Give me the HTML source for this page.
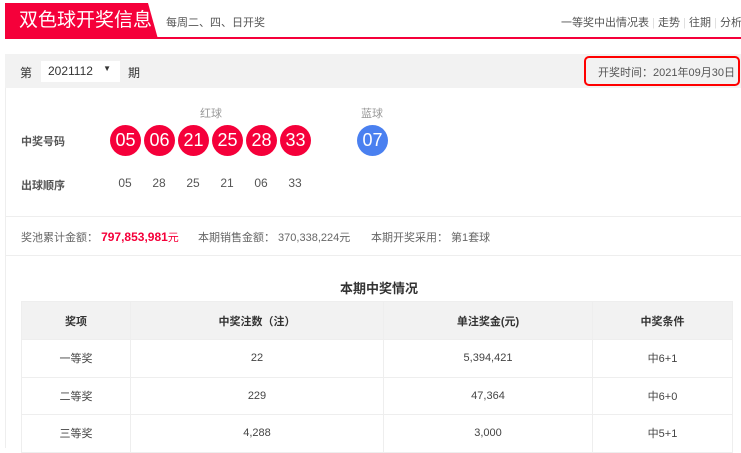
<!DOCTYPE html>
<html><head><meta charset="utf-8"><style>
*{margin:0;padding:0;box-sizing:border-box}
body{width:741px;height:448px;overflow:hidden;background:#fff;font-family:"Liberation Sans","Noto Sans CJK SC",sans-serif;color:#333;position:relative}
.abs{position:absolute;white-space:nowrap}
.ball{position:absolute;width:31px;height:31px;border-radius:50%;background:#f5003a;color:#fff;font-size:18px;line-height:31px;text-align:center;top:125px}
.seq{position:absolute;top:176px;font-size:12px;color:#555;width:30px;text-align:center}
table{position:absolute;left:21px;top:301px;width:712px;border-collapse:collapse;font-size:11px;color:#444}
td{border:1px solid #eee;text-align:center;height:37.5px}
tr.h td{background:#f2f2f2;height:38px;font-weight:bold;color:#333}
</style></head><body>
<svg class="abs" style="left:0;top:0" width="741" height="42"><polygon points="5,3 148,3 158,39 5,39" fill="#f5003a"/><rect x="5" y="37" width="736" height="2" fill="#f5003a"/></svg>
<div class="abs" style="left:19px;top:9px;font-size:19px;color:#fff;line-height:24px">双色球开奖信息</div>
<div class="abs" style="left:166px;top:14px;font-size:11px;color:#555">每周二、四、日开奖</div>
<div class="abs" style="left:561px;top:14px;font-size:11px;color:#555">一等奖中出情况表 <span style="color:#ddd">|</span> 走势 <span style="color:#ddd">|</span> 往期 <span style="color:#ddd">|</span> 分析</div>
<div class="abs" style="left:5px;top:54px;width:736px;height:34px;background:#f2f2f2"></div>
<div class="abs" style="left:5px;top:88px;width:1px;height:360px;background:#eee"></div>
<div class="abs" style="left:20px;top:64px;font-size:12px">第</div>
<div class="abs" style="left:41px;top:61px;width:79px;height:21px;background:#fff;font-size:12px;padding:3px 0 0 7px">2021112<span style="position:absolute;right:9px;top:3px;font-size:8px">▼</span></div>
<div class="abs" style="left:128px;top:64px;font-size:12px">期</div>
<div class="abs" style="left:584px;top:56px;width:156px;height:30px;border:2.5px solid #f00;border-radius:5px"></div>
<div class="abs" style="left:598px;top:64px;font-size:11px;color:#555">开奖时间：2021年09月30日</div>
<div class="abs" style="left:200px;top:105px;font-size:11px;color:#999">红球</div>
<div class="abs" style="left:361px;top:105px;font-size:11px;color:#999">蓝球</div>
<div class="abs" style="left:21px;top:133px;font-size:11px;font-weight:bold;color:#555">中奖号码</div>
<div class="abs" style="left:21px;top:177px;font-size:11px;font-weight:bold;color:#555">出球顺序</div>
<div class="ball" style="left:110px">05</div><div class="ball" style="left:144px">06</div><div class="ball" style="left:178px">21</div><div class="ball" style="left:212px">25</div><div class="ball" style="left:246px">28</div><div class="ball" style="left:280px">33</div>
<div class="ball" style="left:357px;background:#4a80f0">07</div>
<div class="seq" style="left:110px">05</div><div class="seq" style="left:144px">28</div><div class="seq" style="left:178px">25</div><div class="seq" style="left:212px">21</div><div class="seq" style="left:246px">06</div><div class="seq" style="left:280px">33</div>
<div class="abs" style="left:6px;top:216px;width:735px;height:1px;background:#eee"></div>
<div class="abs" style="left:6px;top:255px;width:735px;height:1px;background:#eee"></div>
<div class="abs" style="left:21px;top:229px;font-size:11px;color:#666">奖池累计金额： <b style="color:#f5003a;font-size:12px">797,853,981</b><span style="color:#f5003a">元</span></div>
<div class="abs" style="left:198px;top:229px;font-size:11px;color:#666">本期销售金额： 370,338,224元</div>
<div class="abs" style="left:371px;top:229px;font-size:11px;color:#666">本期开奖采用： 第1套球</div>
<div class="abs" style="left:340px;top:278px;font-size:13px;font-weight:bold">本期中奖情况</div>
<table>
<tr class="h"><td style="width:109px">奖项</td><td style="width:253px">中奖注数（注）</td><td style="width:209px">单注奖金(元)</td><td>中奖条件</td></tr>
<tr><td>一等奖</td><td>22</td><td>5,394,421</td><td>中6+1</td></tr>
<tr><td>二等奖</td><td>229</td><td>47,364</td><td>中6+0</td></tr>
<tr><td>三等奖</td><td>4,288</td><td>3,000</td><td>中5+1</td></tr>
</table>
</body></html>
